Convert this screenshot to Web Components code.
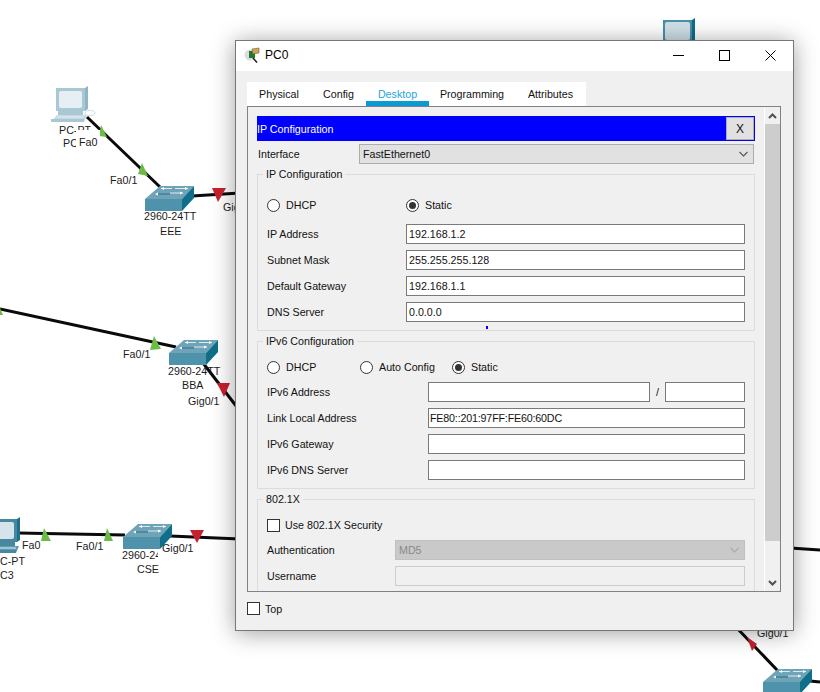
<!DOCTYPE html>
<html>
<head>
<meta charset="utf-8">
<title>PC0</title>
<style>
	html, body { margin: 0; height: 100%; background: #fff; overflow: hidden; }
	body { font: 10.7px "Liberation Sans", Arial, sans-serif; color: #111; }
</style>
</head>
<body>
<net-canvas>
	<net-label x="59" y="124">PC-PT</net-label>
	<net-label x="63" y="137">PC</net-label>
	<net-label x="76" y="130" mask="6px 3px 0">Fa0</net-label>
	<net-label x="110" y="174">Fa0/1</net-label>
	<net-label x="144" y="210">2960-24TT</net-label>
	<net-label x="160" y="225">EEE</net-label>
	<net-label x="223" y="201">Gig</net-label>
	<net-label x="123" y="348">Fa0/1</net-label>
	<net-label x="168" y="365">2960-24TT</net-label>
	<net-label x="182" y="379">BBA</net-label>
	<net-label x="188" y="395">Gig0/1</net-label>
	<net-label x="0" y="555">C-PT</net-label>
	<net-label x="0" y="569">C3</net-label>
	<net-label x="22" y="539">Fa0</net-label>
	<net-label x="76" y="540">Fa0/1</net-label>
	<net-label x="122" y="549" clip="36">2960-24</net-label>
	<net-label x="137" y="563">CSE</net-label>
	<net-label x="162" y="542">Gig0/1</net-label>
	<net-label x="757" y="627">Gig0/1</net-label>
</net-canvas>

<pt-window heading="PC0">
	<pt-tabs active="Desktop" tabs="Physical:64,Config:55,Desktop:63,Programming:86,Attributes:71"></pt-tabs>
	<pt-panel>
		<pt-banner>IP Configuration</pt-banner>
		<pt-select class="iface" label="Interface" value="FastEthernet0"></pt-select>

		<pt-group legend="IP Configuration" style="--top:14px;--bottom:8px;--after:3px;--label:139px;--gap:6px">
			<pt-options style="--row-gap:9px">
				<pt-radio style="width:139px">DHCP</pt-radio>
				<pt-radio checked>Static</pt-radio>
			</pt-options>
			<pt-field label="IP Address" value="192.168.1.2"></pt-field>
			<pt-field label="Subnet Mask" value="255.255.255.128"></pt-field>
			<pt-field label="Default Gateway" value="192.168.1.1"></pt-field>
			<pt-field label="DNS Server" value="0.0.0.0"></pt-field>
			<pt-tick></pt-tick>
		</pt-group>

		<pt-group legend="IPv6 Configuration" style="--top:9px;--bottom:8px;--after:3px;--label:161px;--gap:6px">
			<pt-options style="--row-gap:5px">
				<pt-radio style="width:93px">DHCP</pt-radio>
				<pt-radio style="width:92px">Auto Config</pt-radio>
				<pt-radio checked>Static</pt-radio>
			</pt-options>
			<pt-field label="IPv6 Address" value="" suffix=""></pt-field>
			<pt-field label="Link Local Address" value="FE80::201:97FF:FE60:60DC" style="--ls:-.17px;--pad:1px"></pt-field>
			<pt-field label="IPv6 Gateway" value=""></pt-field>
			<pt-field label="IPv6 DNS Server" value=""></pt-field>
		</pt-group>

		<pt-group legend="802.1X" style="--top:9px;--bottom:8px;--after:0;--label:128px;--gap:6px">
			<pt-options style="--row-gap:5px">
				<pt-check>Use 802.1X Security</pt-check>
			</pt-options>
			<pt-select class="auth" label="Authentication" value="MD5" disabled></pt-select>
			<pt-field label="Username" value="" disabled></pt-field>
		</pt-group>
	</pt-panel>
	<pt-check slot="footer">Top</pt-check>
</pt-window>

<script>
// small helper so each element just hands over its css + html
class ShadowBox extends HTMLElement {
	constructor() {
		super();
		this.shadow = this.attachShadow({mode: "open"});
	}
	render(css, html) {
		this.shadow.innerHTML = `<style>${css}</style>${html}`;
	}
}

// the logical topology behind the dialog: cables, link lights, devices
const switchIcon = (x, y) => `<g transform="translate(${x} ${y})">
		<path d="M0 13 L15 0 H49 L37 13Z" fill="#6fa3b8"/>
		<path d="M0 13 H37 V25 H0Z" fill="#4f92ac"/>
		<path d="M37 13 L49 0 V12 L37 25Z" fill="#0f6f88"/>
		<path d="M16 2.5 H27 M30 2.5 H43" stroke="#dcebf0" fill="none"/>
		<path d="M25 7 H38" stroke="#dcebf0" fill="none"/>
		<path d="M11 8 H25" stroke="#2f6f88" fill="none"/>
		<path d="M10 8 l3 -1.5 v3z M43 2.5 l-3 -1.5 v3z M16 2.5 l3 -1.5 v3z M38 7 l-3 -1.5 v3z" fill="#fff"/>
	</g>`;
const pcIcon = (x, y, frame, side, screen, base) => `<g transform="translate(${x} ${y})">
		<path d="M5 2 H34 L37 0 V23 L34 25 H5Z" fill="${side}"/>
		<rect x="5" y="2" width="29" height="23" rx="1" fill="${frame}"/>
		<rect x="8" y="5" width="23" height="17" rx="2" fill="${screen}"/>
		<path d="M7 25 H32 V29 H7Z" fill="${frame}"/>
		<path d="M6 29 H36 L33 36 H0Z" fill="${base}"/>
		<path d="M0 33 H33 V36 H0Z" fill="${frame}"/>
		<path d="M6 31 H33" stroke="#e4eef2"/>
	</g>`;

class NetCanvas extends ShadowBox {
	connectedCallback() {
		let cable = (d, w) => `<path d="${d}" stroke="#0a0a0a" stroke-width="${w || 3}" fill="none"/>`;
		let green = p => `<polygon points="${p}" fill="#6dbb46"/>`;
		let red = p => `<polygon points="${p}" fill="#c8202f"/>`;
		this.render(`
			:host { position: absolute; inset: 0; display: block; overflow: hidden; background: #fff; }
			svg { position: absolute; left: 0; top: 0; }
		`, `
			<svg width="820" height="692" viewBox="0 0 820 692">
				${cable("M87 117 L160 187")}
				${cable("M192 196 L240 193")}
				${cable("M0 309 L176 347")}
				${cable("M203 363 L240 411")}
				${cable("M18 533 L125 535")}
				${cable("M170 536 L240 539")}
				${cable("M790 548 L820 550")}
				${cable("M735 626 L778 671")}
				${cable("M810 681 L820 682")}
				${pcIcon(51, 86, "#a9c8d3", "#8fb6c4", "#e6eff4", "#c5d9e1")}
				<ellipse cx="90" cy="113" rx="5" ry="2.5" fill="#fff" stroke="#cfdde3"/>
				${pcIcon(-17, 517, "#47879f", "#1f708a", "#d5e3ea", "#5d9bb2")}
				<g transform="translate(663 18)">
					<path d="M0 2 H29 L32 0 V22 H0Z" fill="#0f6d86"/>
					<rect x="0" y="2" width="29" height="21" rx="1" fill="#4b8fa6"/>
					<rect x="2" y="4" width="25" height="18" rx="2" fill="#cfe0e8"/>
				</g>
				${switchIcon(145, 186)}
				${switchIcon(169, 340)}
				${switchIcon(123, 524)}
				${switchIcon(763, 669)}
				<path d="M763 682 H800 V692 H763Z" fill="#4f92ac"/>
				<path d="M800 682 L812 669 V680 L800 692Z" fill="#0f6f88"/>
				${green("101,125 107,137 99,136")}
				${green("142,163 148,176 138,174")}
				${green("154,336 161,349 150,350")}
				${green("0,308 3,315 0,315")}
				${green("44,528 51,541 41,541")}
				${green("107,528 113,541 104,541")}
				${red("212,188 226,188 218,202")}
				${red("217,383 230,383 224,397")}
				${red("190,530 204,530 197,543")}
				${red("747,637 757,644 752,651")}
			</svg>
			<slot></slot>
		`);
	}
}

// device and port captions; mask = white box hiding what is behind, clip = cut width
class NetLabel extends ShadowBox {
	connectedCallback() {
		let mask = this.getAttribute("mask");
		let clip = this.getAttribute("clip");
		this.render(`
			:host {
				position: absolute;
				left: ${this.getAttribute("x")}px;
				top: ${this.getAttribute("y")}px;
				display: block;
				font: 10.7px/12px "Liberation Sans", Arial, sans-serif;
				color: #1a1a1a;
				white-space: nowrap;
				${mask ? `background: #fff; padding: ${mask};` : ""}
				${clip ? `width: ${clip}px; overflow: hidden;` : ""}
			}
		`, `<slot></slot>`);
	}
}

// draggable-looking window on the workspace
class PtWindow extends ShadowBox {
	connectedCallback() {
		this.render(`
			:host {
				position: absolute;
				left: 235px;
				top: 40px;
				width: 559px;
				height: 591px;
				box-sizing: border-box;
				display: flex;
				flex-direction: column;
				background: #f0f0f0;
				border: 1px solid #777;
				box-shadow: 0 2px 22px rgba(0,0,0,.38);
			}
			.bar { height: 30px; flex: none; background: #fff; display: flex; align-items: flex-start; padding-left: 8px; font-size: 12px; color: #000; }
			.bar span { margin-left: 5px; flex: 1; line-height: 28px; }
			.bar svg { display: block; flex: none; }
			.bar > svg { margin-top: 6px; }
			.btn { width: 46px; height: 28px; display: flex; align-items: center; justify-content: center; }
			.body { flex: 1; display: flex; flex-direction: column; padding: 11px 12px 0 11px; min-height: 0; }
			.foot { height: 38px; box-sizing: border-box; flex: none; display: flex; align-items: center; padding: 0 0 5px 11px; font-size: 10.7px; }
		`, `
			<div class="bar">
				<svg width="16" height="16" viewBox="0 0 16 16">
					<circle cx="6" cy="8" r="5.5" fill="#dcdcdc"/>
					<rect x="5" y="4" width="6" height="7" fill="#1f7a2e"/>
					<path d="M8 2 L15 1 V6 L9 7Z" fill="#c9a35a" stroke="#7d6230" stroke-width=".6"/>
					<path d="M9 11 L13 15.5" stroke="#222" stroke-width="1.6"/>
				</svg>
				<span>${this.getAttribute("heading")}</span>
				<div class="btn"><svg width="11" height="11"><path d="M0 5.5 H11" stroke="#000"/></svg></div>
				<div class="btn"><svg width="11" height="11"><rect x=".5" y=".5" width="10" height="10" fill="none" stroke="#000"/></svg></div>
				<div class="btn"><svg width="11" height="11"><path d="M.5 .5 L10.5 10.5 M10.5 .5 L.5 10.5" stroke="#000" fill="none"/></svg></div>
			</div>
			<div class="body"><slot></slot></div>
			<div class="foot"><slot name="footer"></slot></div>
		`);
	}
}

class PtTabs extends ShadowBox {
	connectedCallback() {
		let active = this.getAttribute("active");
		let tabs = this.getAttribute("tabs").split(",").map(t => {
			let [name, w] = t.split(":");
			return `<div class="tab ${name == active ? "on" : ""}" style="width:${w}px">${name}</div>`;
		}).join("");
		this.render(`
			:host { display: flex; flex: none; height: 24px; align-self: flex-start; background: #fff; }
			.tab { text-align: center; line-height: 25px; color: #111; box-sizing: border-box; height: 24px; }
			.on { color: #1fa3dc; border-bottom: 5px solid #0a9ad6; }
		`, tabs);
	}
}

// bordered tab body, clips its content and carries the scrollbar
class PtPanel extends ShadowBox {
	connectedCallback() {
		this.render(`
			:host { display: flex; flex: 1; min-height: 0; border: 1px solid #7f8388; overflow: hidden; }
			.content { width: 516px; flex: none; box-sizing: border-box; padding: 9px 0 0 9px; display: flex; flex-direction: column; overflow: hidden; }
			.scroll { width: 17px; flex: none; display: flex; flex-direction: column; background: #f0f0f0; border-left: 1px solid #fff; padding-right: 1px; box-sizing: border-box; }
			.arrow { height: 17px; flex: none; display: flex; align-items: center; justify-content: center; }
			.thumb { height: 417px; flex: none; background: #cdcdcd; }
			.rest { flex: 1; }
		`, `
			<div class="content"><slot></slot></div>
			<div class="scroll">
				<div class="arrow"><svg width="9" height="6"><path d="M1 5 L4.5 1.5 L8 5" fill="none" stroke="#505050" stroke-width="2"/></svg></div>
				<div class="thumb"></div>
				<div class="rest"></div>
				<div class="arrow"><svg width="9" height="6"><path d="M1 1 L4.5 4.5 L8 1" fill="none" stroke="#505050" stroke-width="2"/></svg></div>
			</div>
		`);
	}
}

class PtBanner extends ShadowBox {
	connectedCallback() {
		this.render(`
			:host { display: flex; flex: none; width: 498px; height: 25px; box-sizing: border-box; align-items: center; justify-content: space-between; background: #0000ff; color: #fff; padding: 1px 1px 1px 0; }
			.x { width: 28px; height: 23px; box-sizing: border-box; background: #e1e1e1; border: 1px solid #adadad; color: #111; font-size: 12px; display: flex; align-items: center; justify-content: center; }
		`, `<slot></slot><div class="x">X</div>`);
	}
}

class PtGroup extends ShadowBox {
	connectedCallback() {
		this.render(`
			:host { display: block; flex: none; width: 498px; margin-bottom: var(--after); }
			fieldset { margin: 0; border: 1px solid #dcdcdc; padding: var(--top) 9px var(--bottom) 9px; display: flex; flex-direction: column; gap: var(--gap); min-width: 0; position: relative; }
			legend { margin-left: -4px; padding: 0 3px; line-height: 14px; color: #111; }
		`, `
			<fieldset>
				<legend>${this.getAttribute("legend")}</legend>
				<slot></slot>
			</fieldset>
		`);
	}
}

class PtOptions extends ShadowBox {
	connectedCallback() {
		this.render(`
			:host { display: flex; height: 20px; align-items: center; margin-bottom: calc(var(--row-gap) - 6px); }
		`, `<slot></slot>`);
	}
}

class PtRadio extends ShadowBox {
	connectedCallback() {
		let on = this.hasAttribute("checked");
		this.render(`
			:host { display: flex; align-items: center; gap: 6px; flex: none; }
			svg { display: block; flex: none; }
		`, `
			<svg width="13" height="13">
				<circle cx="6.5" cy="6.5" r="6" fill="#fff" stroke="#333"/>
				${on ? `<circle cx="6.5" cy="6.5" r="3.5" fill="#333"/>` : ""}
			</svg>
			<slot></slot>
		`);
	}
}

class PtCheck extends ShadowBox {
	connectedCallback() {
		this.render(`
			:host { display: flex; align-items: center; gap: 5px; flex: none; }
			i { width: 13px; height: 13px; box-sizing: border-box; border: 1px solid #333; background: #fff; display: block; flex: none; }
		`, `<i></i><slot></slot>`);
	}
}

// label + text box, optional "/ prefix" pair for the ipv6 address
class PtField extends ShadowBox {
	connectedCallback() {
		let off = this.hasAttribute("disabled");
		let pair = this.hasAttribute("suffix");
		this.render(`
			:host { display: grid; grid-template-columns: var(--label) 1fr; align-items: center; height: 20px; }
			.boxes { display: flex; align-items: center; min-width: 0; }
			.box { flex: 1; height: 20px; box-sizing: border-box; border: 1px solid ${off ? "#ccc" : "#7a7a7a"}; background: ${off ? "#f0f0f0" : "#fff"}; padding-left: var(--pad, 2px); letter-spacing: var(--ls, 0); line-height: 18px; color: #111; }
			.sl { width: 15px; text-align: center; flex: none; }
			.pre { width: 80px; flex: none; }
		`, `
			<div>${this.getAttribute("label")}</div>
			<div class="boxes">
				<div class="box">${this.getAttribute("value")}</div>
				${pair ? `<div class="sl">/</div><div class="box pre"></div>` : ""}
			</div>
		`);
	}
}

class PtSelect extends ShadowBox {
	connectedCallback() {
		let off = this.hasAttribute("disabled");
		let iface = this.classList.contains("iface");
		this.render(`
			:host { display: grid; grid-template-columns: ${iface ? "101px 395px" : "var(--label) 1fr"}; align-items: center; height: 20px; flex: none; ${iface ? "margin-top: 3px; margin-bottom: 3px; padding-left: 1px;" : ""} }
			.box { height: 20px; box-sizing: border-box; border: 1px solid ${off ? "#c0c0c0" : "#adadad"}; background: ${off ? "#c9c9c9" : "#e1e1e1"}; color: ${off ? "#8a8a8a" : "#111"}; padding: 0 5px 0 3px; line-height: 18px; display: flex; justify-content: space-between; align-items: center; }
			svg { display: block; }
		`, `
			<div>${this.getAttribute("label")}</div>
			<div class="box">
				<span>${this.getAttribute("value")}</span>
				<svg width="9" height="6"><path d="M.5 1 L4.5 5 L8.5 1" fill="none" stroke="${off ? "#aaa" : "#555"}" stroke-width="1.1"/></svg>
			</div>
		`);
	}
}

// stray blue mark under the DNS row
class PtTick extends ShadowBox {
	connectedCallback() {
		this.render(`
			:host { position: absolute; left: 228px; top: 145px; width: 2px; height: 3px; background: #0000ff; display: block; }
		`, ``);
	}
}

customElements.define("net-canvas", NetCanvas);
customElements.define("net-label", NetLabel);
customElements.define("pt-window", PtWindow);
customElements.define("pt-tabs", PtTabs);
customElements.define("pt-panel", PtPanel);
customElements.define("pt-banner", PtBanner);
customElements.define("pt-group", PtGroup);
customElements.define("pt-options", PtOptions);
customElements.define("pt-radio", PtRadio);
customElements.define("pt-check", PtCheck);
customElements.define("pt-field", PtField);
customElements.define("pt-select", PtSelect);
customElements.define("pt-tick", PtTick);
</script>
</body>
</html>
